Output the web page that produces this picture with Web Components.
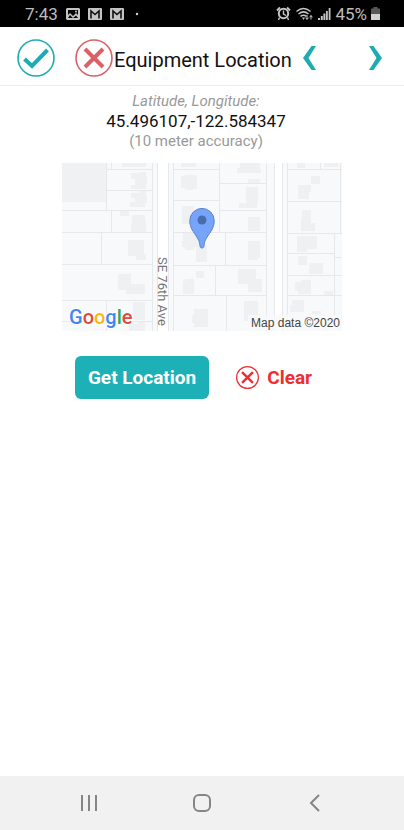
<!DOCTYPE html>
<html lang="en">
<head>
<meta charset="utf-8">
<meta name="viewport" content="width=device-width, initial-scale=1">
<title>Equipment Location</title>
<style>
  body {
    margin: 0;
    background: #fff;
    color: #111;
    font-family: Roboto, "Liberation Sans", sans-serif;
  }
</style>
</head>
<body>
<location-screen></location-screen>

<script>
class StatusBar extends HTMLElement {
  connectedCallback() {
    this.attachShadow({ mode: 'open' });
    this.shadowRoot.innerHTML = `
      <style>
        :host {
          display: flex;
          align-items: center;
          justify-content: space-between;
          height: 27px;
          padding: 0 24px 0 25px;
          background: #000;
          color: #bdbdbd;
          font-size: 17px;
          line-height: 20px;
        }

        .group {
          display: flex;
          align-items: center;
          gap: 8px;
        }

        .signals {
          gap: 4px;
        }

        svg {
          display: block;
        }
      </style>

      <div class="group">
        <span>7:43</span>
        <svg width="14" height="12" viewBox="0 0 14 12">
          <path fill="#c4c4c4" fill-rule="evenodd" d="M1 0h12l1 1v10l-1 1H1l-1-1V1zM2 2v5l2-2 3 3 3-3 2 2V2zM2 10h10L10 7.500 7 10 4 7z"/>
          <circle cx="10" cy="3.500" r="1" fill="#c4c4c4"/>
        </svg>
        <svg width="14" height="12" viewBox="0 0 14 12">
          <rect width="14" height="12" rx="1" fill="#c4c4c4"/>
          <path d="M3 10.500V3l4 3.500L11 3v7.500" fill="none" stroke="#111" stroke-width="1.600"/>
        </svg>
        <svg width="14" height="12" viewBox="0 0 14 12">
          <rect width="14" height="12" rx="1" fill="#c4c4c4"/>
          <path d="M3 10.500V3l4 3.500L11 3v7.500" fill="none" stroke="#111" stroke-width="1.600"/>
        </svg>
        <svg width="14" height="12" viewBox="0 0 14 12">
          <circle cx="5" cy="6" r="1.200" fill="#d0d0d0"/>
        </svg>
      </div>

      <div class="group signals">
        <svg width="15" height="15" viewBox="0 0 15 15" fill="none" stroke="#c4c4c4">
          <circle cx="7.500" cy="7.500" r="4.700" stroke-width="2"/>
          <path d="M1 4.500 4 1.500M14 4.500 11 1.500" stroke-width="2"/>
          <path d="M3.500 11.500 2.500 14M11.500 11.500l1 2.500M7.500 4.500v3.500l2.500 1.500" stroke-width="1.400"/>
        </svg>
        <svg width="19" height="14" viewBox="0 0 19 14" fill="none" stroke="#c4c4c4">
          <path d="M1.500 4.500Q8.500-1.500 15.500 4.500M3.500 7Q8.500 2.800 13.500 7M5.500 9.300Q8.500 7 11.500 9.300" stroke-width="1.500"/>
          <path d="M7 10.500h3L8.500 13z" fill="#c4c4c4" stroke="none"/>
          <path d="M12 8v4M10.600 10.700 12 12.500l1.400-1.800M16 12.500v-4M14.600 10.300 16 8.500l1.400 1.800" stroke-width="1"/>
        </svg>
        <svg width="13" height="12" viewBox="0 0 13 12" fill="#c4c4c4">
          <path d="M0 10h2v2H0zM2.800 8h2v4h-2zM5.400 5.500h2V12h-2zM8 3h1.800v9H8zM10.700 0h1.800v12h-1.800z"/>
        </svg>
        <span>45%</span>
        <svg width="9" height="13" viewBox="0 0 9 13">
          <path d="M2.500 0h4v1.500H9V13H0V1.500h2.500z" fill="#585858"/>
          <path d="M0 7h9v6H0z" fill="#d2d2d2"/>
        </svg>
      </div>
    `;
  }
}

class RoundIcon extends HTMLElement {
  connectedCallback() {
    const marks = {
      check: 'M7.500 20 15 27 30.500 11',
      cross: 'M10 10 28 28M28 10 10 28'
    };
    const ring = this.getAttribute('ring') || '1.600';

    this.attachShadow({ mode: 'open' });
    this.shadowRoot.innerHTML = `
      <style>
        :host {
          display: block;
          width: var(--icon-size, 38px);
          height: var(--icon-size, 38px);
        }

        svg {
          display: block;
          width: 100%;
          height: 100%;
        }
      </style>
      <svg viewBox="0 0 38 38" fill="none" stroke="currentColor" aria-hidden="true">
        <circle cx="19" cy="19" r="18" stroke-width="${ring}"/>
        <path d="${marks[this.getAttribute('mark')]}" stroke-width="4"/>
      </svg>
    `;
  }
}

class PageHeader extends HTMLElement {
  connectedCallback() {
    this.attachShadow({ mode: 'open' });
    this.shadowRoot.innerHTML = `
      <style>
        :host {
          display: flex;
          align-items: center;
          height: 59px;
          padding: 4px 22px 0 17px;
          box-sizing: border-box;
          border-bottom: 1px solid #ececec;
          background: #fff;
        }

        button {
          padding: 0;
          border: 0;
          background: none;
          color: #1fabb2;
          cursor: pointer;
        }

        .cancel {
          margin-left: 20px;
          color: #db6167;
        }

        h1 {
          margin: 4px 0 0 1px;
          color: #111;
          font-size: 20px;
          font-weight: 400;
          line-height: 24px;
          white-space: nowrap;
        }

        nav {
          flex: 1;
          display: flex;
          justify-content: space-between;
          margin-left: 11px;
        }

        svg {
          display: block;
        }
      </style>

      <button type="button" aria-label="Save"><round-icon mark="check"></round-icon></button>
      <button type="button" class="cancel" aria-label="Cancel"><round-icon mark="cross"></round-icon></button>
      <h1><slot></slot></h1>
      <nav>
        <button type="button" aria-label="Previous">
          <svg width="14" height="24" viewBox="0 0 14 24"><path d="M8.500 0H13L5.500 12 13 24H8.500L0 12z" fill="currentColor"/></svg>
        </button>
        <button type="button" aria-label="Next">
          <svg width="14" height="24" viewBox="0 0 14 24"><path d="M5.500 0H1l7.500 12L1 24h4.500L14 12z" fill="currentColor"/></svg>
        </button>
      </nav>
    `;
  }
}

class LocationReadout extends HTMLElement {
  connectedCallback() {
    this.attachShadow({ mode: 'open' });
    this.shadowRoot.innerHTML = `
      <style>
        :host {
          display: block;
          padding: 5px 12px 0 0;
          text-align: center;
          color: #999;
          font-size: 15px;
          line-height: 20px;
        }

        p {
          margin: 0;
        }

        .label {
          font-style: italic;
        }

        .value {
          color: #111;
          font-size: 17px;
        }
      </style>
      <p class="label">Latitude, Longitude:</p>
      <p class="value"><slot></slot></p>
      <p><slot name="accuracy"></slot></p>
    `;
  }
}

class StreetMap extends HTMLElement {
  connectedCallback() {
    this.attachShadow({ mode: 'open' });
    this.shadowRoot.innerHTML = `
      <style>
        :host {
          display: block;
          width: 280px;
          max-width: 100%;
        }

        svg {
          display: block;
          width: 100%;
          height: auto;
        }

        .lots {
          fill: none;
          stroke: #e7e8ea;
        }

        .buildings {
          fill: #eff0f1;
        }

        .logo {
          font: 500 20px Roboto, sans-serif;
        }

        .street {
          fill: #777;
          font-size: 13px;
        }

        .credit {
          fill: #444;
          font: 12px "Liberation Sans", Arial, sans-serif;
        }
      </style>

      <svg viewBox="0 0 280 168" role="img" aria-label="Map of SE 76th Ave">
        <rect width="280" height="168" fill="#f8f9fa"/>
        <rect width="44" height="39" fill="#f0f1f2"/>

        <g class="buildings">
          <path d="M60 0h24v4H60zM69 10h8V9h7v4h1v8h-1v5H69v-4h4v-6h-4z"/>
          <path d="M69 30h8v-2h7v5h1v7h-2v4H68v-5h5v-4h-4zM58 47h9v6h-9zM70 52h13v5h1v12H69v-9h1z"/>
          <path d="M66 77h16v14h2v6H74v-4h-8zM56 111h13v10h14v10H64v-4h-8zM71 139h12v18H71zM67 161h9v-2h7v9H67z"/>
          <path d="M119 13h4v-1h12v14h-4v1h-8v-2h-4zM119 0h15v4h-15zM120 43h12v15h-4v3h-8z"/>
          <path d="M121 70h16v14h-5v3h-9v-3h-3v-6h1zM134 83h11v16h-11zM123 116h9v15h-11v-13h2zM134 108h8v7h-8zM132 146h14v18h-14v-4h-2v-8h2z"/>
          <path d="M178 0h20v6h1v4h-24V5h3zM186 16h12v4h-12zM184 24h12v17h-1v4h-18v-5h7zM186 54h12v14h-12zM186 78h12v17h-2v2h-10z"/>
          <path d="M176 106h18v10h6v13h-14v-8h-10zM182 138h14v20h-14z"/>
          <path d="M235 0h8v5h-8zM262 0h14v4h-14zM249 13h9v8h-9zM236 22h13v7h-2v7h-11zM240 47h9v13h4v8h-14V56h1z"/>
          <path d="M235 73h20v13h-10v3h-10zM236 93h9v9h-9zM248 100h13v11h-14v-9h1zM233 119h6v-2h10v14h-13v-3h-3zM262 128h9v4h-9zM230 137h12v12h-14v-7h2zM250 148h9v3h-9z"/>
        </g>

        <path class="lots" d="M44.500 0v47M49.500 0v6M44 6.500h46M44 27.500h46M0 47.500h90M49.500 47v22M0 69.500h90M39.500 69v32M0 101.500h90M0 137.500h90M44.500 137v31M0 158.500h90"/>
        <path class="lots" d="M111 6.500h46M111 37.500h46M111 69.500h94M111 102.500h94M111 132.500h94M157.500 0v69M157 20.500h47M157 47.500h47M163.500 69v33M153.500 102v30M164.500 132v36"/>
        <path class="lots" d="M225 6.500h55M258.500 0v6M225 38.500h55M278.500 0v70M225 70.500h55M225 90.500h47M272.500 70v98M272 94.500h8M225 112.500h55M225 132.500h55"/>

        <rect x="95" width="12" height="168" fill="#fff"/>
        <rect x="212" width="9" height="168" fill="#fff"/>
        <path class="lots" d="M90.500 0v168M95.500 0v168M106.500 0v168M111.500 0v168M204.500 0v168M212.500 0v168M220.500 0v168M225.500 0v168"/>

        <text class="street" transform="translate(96 94) rotate(90)">SE 76th Ave</text>

        <path d="M140 85c-1.500 0-2-.800-2.100-3-.500-6-4.900-10-7.900-15.500-1.400-2.600-2.200-5.500-2.200-8.900a12.200 12.200 0 0 1 24.400 0c0 3.400-.800 6.300-2.200 8.900-3 5.500-7.400 9.500-7.900 15.500-.1 2.200-.6 3-2.100 3z" fill="#76a4fa" stroke="#5b82c9"/>
        <circle cx="140" cy="57" r="4.500" fill="#4a6cab"/>

        <rect x="186" y="152" width="94" height="16" fill="#f8f9fa" opacity=".8"/>
        <text class="credit" x="278" y="164" text-anchor="end">Map data ©2020</text>
        <text class="logo" x="7" y="161" stroke="#fff" stroke-width="2" paint-order="stroke"><tspan fill="#4285f4">G</tspan><tspan fill="#e2483d">o</tspan><tspan fill="#f6b912">o</tspan><tspan fill="#4285f4">g</tspan><tspan fill="#34a853">l</tspan><tspan fill="#e2483d">e</tspan></text>
      </svg>
    `;
  }
}

class LocationActions extends HTMLElement {
  connectedCallback() {
    this.attachShadow({ mode: 'open' });
    this.shadowRoot.innerHTML = `
      <style>
        :host {
          display: flex;
          justify-content: center;
          gap: 14px;
          padding-right: 4px;
        }

        button {
          display: flex;
          align-items: center;
          gap: 8px;
          height: 43px;
          padding: 0 13px;
          border: 0;
          border-radius: 6px;
          font: 700 19px/24px Roboto, "Liberation Sans", sans-serif;
          cursor: pointer;
        }

        .get {
          background: #1eb0b7;
          color: #fff;
        }

        .clear {
          --icon-size: 23px;
          background: none;
          color: #ee2e30;
        }
      </style>
      <button type="button" class="get">Get Location</button>
      <button type="button" class="clear"><round-icon mark="cross" ring="2"></round-icon>Clear</button>
    `;
  }
}

class SystemNav extends HTMLElement {
  connectedCallback() {
    this.attachShadow({ mode: 'open' });
    this.shadowRoot.innerHTML = `
      <style>
        :host {
          display: grid;
          grid-template-columns: repeat(3, 28%);
          justify-content: center;
          height: 54px;
          background: #f1f1f1;
        }

        button {
          display: grid;
          place-items: center;
          padding: 0;
          border: 0;
          background: none;
          cursor: pointer;
        }

        svg {
          fill: none;
          stroke: #858585;
          stroke-width: 2;
        }
      </style>
      <button type="button" aria-label="Recent apps">
        <svg width="18" height="18" viewBox="0 0 18 18"><path d="M2 1v16M9 1v16M16 1v16"/></svg>
      </button>
      <button type="button" aria-label="Home">
        <svg width="18" height="18" viewBox="0 0 18 18"><rect x="1" y="1" width="16" height="16" rx="5"/></svg>
      </button>
      <button type="button" aria-label="Back">
        <svg width="18" height="18" viewBox="0 0 18 18"><path d="M13 1 5 9l8 8"/></svg>
      </button>
    `;
  }
}

class LocationScreen extends HTMLElement {
  connectedCallback() {
    this.attachShadow({ mode: 'open' });
    this.shadowRoot.innerHTML = `
      <style>
        :host {
          display: flex;
          flex-direction: column;
          min-height: 100vh;
        }

        main {
          flex: 1;
        }

        street-map {
          margin: 12px auto 25px;
        }
      </style>
      <status-bar></status-bar>
      <page-header>Equipment Location</page-header>
      <main>
        <location-readout>
          45.496107,-122.584347
          <span slot="accuracy">(10 meter accuracy)</span>
        </location-readout>
        <street-map></street-map>
        <location-actions></location-actions>
      </main>
      <system-nav></system-nav>
    `;
  }
}

customElements.define('round-icon', RoundIcon);
customElements.define('status-bar', StatusBar);
customElements.define('page-header', PageHeader);
customElements.define('location-readout', LocationReadout);
customElements.define('street-map', StreetMap);
customElements.define('location-actions', LocationActions);
customElements.define('system-nav', SystemNav);
customElements.define('location-screen', LocationScreen);
</script>
</body>
</html>
